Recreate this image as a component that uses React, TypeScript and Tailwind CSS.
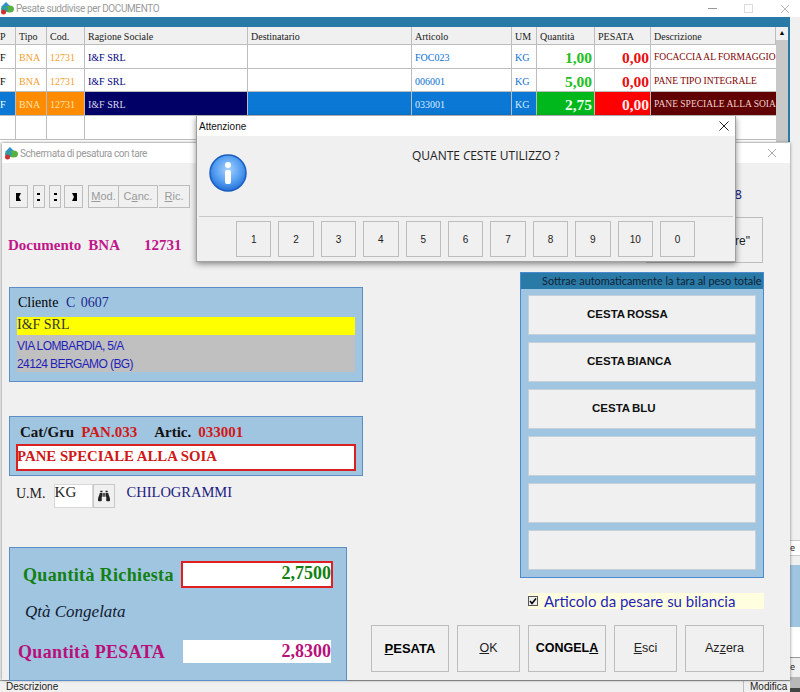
import { FaBinoculars } from "react-icons/fa"

const serif = "font-['Liberation_Serif',serif]"
const sans = "font-['Liberation_Sans',sans-serif]"
const titleFont = "font-['Roboto',sans-serif]"

const cols = [
  ["P", "w-[16px] pl-0"], ["Tipo", "w-[31px] pl-[3px]"], ["Cod.", "w-[38px] pl-[3px]"], ["Ragione Sociale", "w-[163px] pl-[3px]"],
  ["Destinatario", "w-[164px] pl-[3px]"], ["Articolo", "w-[100px] pl-[3px]"], ["UM", "w-[25px] pl-[3px]"], ["Quantità", "w-[58px] pl-[3px]"],
  ["PESATA", "w-[56px] pl-[3px]"], ["Descrizione", "w-[125px] pl-[3px]"],
]

const rows = [
  { art: "FOC023", qty: "1,00", pes: "0,00", desc: "FOCACCIA AL FORMAGGIO" },
  { art: "006001", qty: "5,00", pes: "0,00", desc: "PANE TIPO INTEGRALE" },
  { art: "033001", qty: "2,75", pes: "0,00", desc: "PANE SPECIALE ALLA SOIA", sel: true },
]

function Logo() {
  return (
    <svg width="14" height="13" viewBox="0 0 14 13" className="shrink-0">
      <path d="M6 0 L1 5 L11 5 Z" fill="#2f8fd0" />
      <ellipse cx="9.5" cy="7" rx="4.5" ry="3.5" fill="#58b040" />
      <ellipse cx="4.5" cy="7" rx="3.5" ry="3" fill="#2f9f9f" />
      <circle cx="3.5" cy="10" r="2.5" fill="#d03030" />
    </svg>
  )
}

function InfoIcon() {
  return (
    <svg width="38" height="38" viewBox="0 0 38 38">
      <defs>
        <radialGradient id="infoFill" cx="50%" cy="40%" r="65%">
          <stop offset="0%" stopColor="#a8d2ff" />
          <stop offset="60%" stopColor="#4f9bf0" />
          <stop offset="100%" stopColor="#1c63d0" />
        </radialGradient>
      </defs>
      <circle cx="19" cy="19" r="18" fill="url(#infoFill)" stroke="#1a5cc0" strokeWidth="1.5" />
      <circle cx="19" cy="11" r="3" fill="#fff" />
      <rect x="16" y="16" width="6" height="14" rx="2" fill="#fff" />
    </svg>
  )
}

function NavButton({ w, d }: { w: string; d: string }) {
  return (
    <div className={`${w} h-[23px] border border-[#bdbdbd] flex items-center justify-center`}>
      <svg width="6" height="8" viewBox="0 0 6 8"><path d={d} fill="#000" /></svg>
    </div>
  )
}

function Grid() {
  return (
    <div className={`${serif} w-[790px] border-r-2 border-[#2a7aa8] bg-white`}>
      <div className="h-[10px] bg-[#2a7aa8]" />
      <div className="flex">
        <div>
          <div className="flex h-[18px] bg-[#f0f0f0] border-b border-[#bdbdbd]">
            {cols.map(([label, w]) => (
              <div key={label} className={`${w} border-r border-[#bdbdbd] text-[10px] leading-[19px] text-[#222] whitespace-nowrap overflow-hidden`}>{label}</div>
            ))}
          </div>
          {rows.map((r) => (
            <div key={r.art} className={`flex h-[23.5px] border-b border-[#bdbdbd] text-[10px] leading-[25px] whitespace-nowrap ${r.sel ? "bg-[#0a78d4]" : "bg-white"}`}>
              <div className={`w-[16px] border-r border-[#bdbdbd] ${r.sel ? "text-white" : "text-black"}`}>F</div>
              <div className={`w-[31px] border-r border-[#bdbdbd] pl-[3px] ${r.sel ? "bg-[#ff8c00] text-[#ffe2b0]" : "text-[#f0a030]"}`}>BNA</div>
              <div className={`w-[38px] border-r border-[#bdbdbd] pl-[3px] ${r.sel ? "bg-[#ff8c00] text-[#ffe2b0]" : "text-[#f0a030]"}`}>12731</div>
              <div className={`w-[163px] border-r border-[#bdbdbd] pl-[3px] ${r.sel ? "bg-[#000066] text-[#d8d8f0]" : "text-[#000080]"}`}>I&amp;F SRL</div>
              <div className="w-[164px] border-r border-[#bdbdbd]" />
              <div className={`w-[100px] border-r border-[#bdbdbd] pl-[3px] ${r.sel ? "text-[#dcecff]" : "text-[#0a70d0]"}`}>{r.art}</div>
              <div className={`w-[25px] border-r border-[#bdbdbd] pl-[3px] ${r.sel ? "text-[#dcecff]" : "text-[#0a70d0]"}`}>KG</div>
              <div className={`w-[58px] border-r border-[#bdbdbd] pr-[2px] text-right text-[15.5px] font-bold ${r.sel ? "bg-[#00b81c] text-[#e8ffe8]" : "text-[#22c01e]"}`}>{r.qty}</div>
              <div className={`w-[56px] border-r border-[#bdbdbd] pr-[1px] text-right text-[15.5px] font-bold ${r.sel ? "bg-[#ff0000] text-[#ffe8e8]" : "text-[#e81010]"}`}>{r.pes}</div>
              <div className={`w-[125px] pl-[3px] text-[9.5px] overflow-hidden ${r.sel ? "bg-[#600000] text-[#f0d0d0]" : "text-[#800000]"}`}>{r.desc}</div>
            </div>
          ))}
          <div className="flex h-[24px] border-b border-[#bdbdbd]">
            {cols.slice(0, 3).map(([label, w]) => <div key={label} className={`${w} border-r border-[#bdbdbd]`} />)}
          </div>
        </div>
        <div className="w-[14px] h-[115px] bg-[#c8c8c8] flex flex-col">
          <div className="h-[13px] bg-[#f0f0f0] flex items-center justify-center text-[7px] leading-none text-black">▲</div>
        </div>
      </div>
    </div>
  )
}

function WeighWindow() {
  return (
    <div className="absolute left-[2px] top-[143px] w-[788px] h-[537px] bg-[#f0f0f0] shadow-[0_0_3px_rgba(0,0,0,0.5)]">
      <div className="flex h-[20px] items-center bg-white pl-[2px] gap-[2px]">
        <Logo />
        <span className={`${titleFont} text-[10px] text-[#9a9a9a] tracking-[-0.4px]`}>Schermata di pesatura con tare</span>
      </div>

      <div className="flex pl-[7px]">
        {/* left column: toolbar, document, customer, article, quantities */}
        <div className="w-[354px] shrink-0">
          <div className="flex items-center pt-[22px]">
            <NavButton w="w-[19px]" d="M0 0H5L3 4L5 8H0Z" />
            <div className="w-[5px]" />
            <NavButton w="w-[12px]" d="M1 0H4V2H1Z M1 6H4V8H1Z" />
            <div className="w-[4px]" />
            <NavButton w="w-[12px]" d="M2 0H5V2H2Z M2 6H5V8H2Z" />
            <div className="w-[3px]" />
            <NavButton w="w-[19px]" d="M6 0H1L3 4L1 8H6Z" />
            <div className="w-[5px]" />
            <div className={`${sans} flex h-[23px] text-[11px] leading-[21px] text-[#9a9a9a] text-center`}>
              <div className="w-[31px] border border-[#bdbdbd]"><u>M</u>od.</div>
              <div className="w-[39px] border border-l-0 border-[#bdbdbd]">C<u>a</u>nc.</div>
              <div className="w-[31px] border border-l-0 border-[#bdbdbd] ml-[1px]"><u>R</u>ic.</div>
            </div>
          </div>

          <div className={`${serif} mt-[27px] flex text-[15px] leading-[20px] font-bold text-[#c0168a] whitespace-nowrap`}>
            <span className="ml-[-1px]">Documento</span>
            <span className="ml-[7px]">BNA</span>
            <span className="ml-[24px]">12731</span>
          </div>

          <div className="mt-[32px] h-[95px] border border-[#5b8ec7] bg-[#a0c5e0] px-[7px] pt-[5px]">
            <div className={`${serif} h-[24px] pl-[1px] text-[14px] leading-[20px] text-black whitespace-nowrap`}>
              Cliente <span className="ml-[4px] text-[#1a2a90]">C</span> <span className="ml-[2px] text-[#1a2a90]">0607</span>
            </div>
            <div className={`${serif} h-[18px] bg-[#ffff00] text-[14px] leading-[16px] text-[#333]`}>I&amp;F SRL</div>
            <div className={`${sans} h-[19px] bg-[#c0c0c0] text-[12px] leading-[22px] text-[#1f1fb8] tracking-[-0.6px]`}>VIA LOMBARDIA, 5/A</div>
            <div className={`${sans} h-[18px] bg-[#c0c0c0] text-[12px] leading-[21px] text-[#1f1fb8] tracking-[-0.6px]`}>24124 BERGAMO (BG)</div>
          </div>

          <div className="mt-[34px] h-[60px] border border-[#5b8ec7] bg-[#a0c5e0] px-[6px] pt-[5px]">
            <div className={`${serif} flex h-[22px] pl-[4px] text-[15px] leading-[20px] font-bold text-[#111] whitespace-nowrap`}>
              <span>Cat/Gru</span>
              <span className="ml-[7px] text-[#d01818]">PAN.033</span>
              <span className="ml-[17px]">Artic.</span>
              <span className="ml-[7px] text-[#d01818]">033001</span>
            </div>
            <div className={`${serif} h-[27px] border-2 border-[#d82020] bg-white text-[14.8px] leading-[20px] font-bold text-[#d01818] -indent-[1px]`}>PANE SPECIALE ALLA SOIA</div>
          </div>

          <div className={`${serif} mt-[8px] flex h-[24px] items-start`}>
            <span className="ml-[7px] mt-[1px] text-[14px] leading-[18px] text-[#222]">U.M.</span>
            <div className="ml-[8px] flex h-[24px]">
              <div className="w-[39px] bg-white text-[15px] leading-[15px] text-[#222] border border-[#d8d8d8]">KG</div>
              <div className="w-[22px] border border-[#c8c8c8] flex items-center justify-center">
                <FaBinoculars size={12} className="text-[#222]" />
              </div>
            </div>
            <span className="ml-[12px] text-[14.5px] leading-[16px] text-[#1a2080]">CHILOGRAMMI</span>
          </div>

          <div className="mt-[39px] w-[338px] h-[134px] border border-[#5b8ec7] bg-[#a0c5e0] pt-[13px]">
            <div className={`${serif} flex h-[27px] pl-[13px] items-center`}>
              <span className="w-[158px] text-[18px] leading-[24px] font-bold text-[#128012] whitespace-nowrap tracking-[0.35px]">Quantità Richiesta</span>
              <div className="w-[152px] h-[27px] border-2 border-[#e02020] bg-white text-right text-[18px] leading-[21px] font-bold text-[#128012]">2,7500</div>
            </div>
            <div className={`${serif} h-[52px] pl-[15px] text-[17px] leading-[48px] italic text-[#111a30]`}>Qtà Congelata</div>
            <div className={`${serif} flex h-[23px] pl-[8px] items-center`}>
              <span className="w-[165px] text-[18px] leading-[28px] font-bold text-[#b8107a] whitespace-nowrap tracking-[0.35px]">Quantità PESATA</span>
              <div className="w-[148px] h-[23px] bg-white text-right text-[18px] leading-[22px] font-bold text-[#b8107a]">2,8300</div>
            </div>
          </div>
        </div>

        {/* right column: hidden button, baskets, checkbox, actions */}
        <div className="ml-[8px] w-[393px]">
          <div className="h-[29px] pt-[23px] text-right pr-[22px] text-[13px] leading-[16px] text-[#1a2080]">8</div>
          <div className={`${sans} ml-[275px] mt-[25px] w-[117px] h-[46px] border border-[#bdbdbd] text-right pr-[12px] pt-[14px] text-[12px] text-[#222]`}>re"</div>

          <div className="ml-[149px] mt-[9px] w-[244px] h-[306px] border border-[#4a8ad0] bg-[#a0c5e0]">
            <div className="h-[16px] bg-[#2a7aa8] pl-[21px] text-[10.9px] leading-[16px] text-[#123] font-['Lato',sans-serif] whitespace-nowrap overflow-hidden">Sottrae automaticamente la tara al peso totale</div>
            <div className="flex flex-col gap-[7px] px-[7px] pt-[6px]">
              {["CESTA ROSSA", "CESTA BIANCA", "CESTA BLU", "", "", ""].map((label, i) => (
                <div key={i} className={`${sans} h-[40px] border border-[#c4d0da] bg-[#f0f0f0] text-[11.5px] leading-[36px] font-bold text-[#111] [word-spacing:-1px] ${i === 2 ? "pl-[63px]" : "pl-[58px]"}`}>{label}</div>
              ))}
            </div>
          </div>

          <div className="ml-[157px] mt-[15px] w-[236px] h-[16px] flex items-center bg-[#ffffe0]">
            <div className="w-[10px] h-[10px] border border-[#555] bg-[#eee] flex items-center justify-center">
              <svg width="8" height="8" viewBox="0 0 8 8"><path d="M1 4 L3 6.5 L7 1.5" stroke="#000" strokeWidth="1.5" fill="none" /></svg>
            </div>
            <span className="ml-[6px] font-['Lato',sans-serif] text-[15px] leading-[18px] text-[#1f1fb8] whitespace-nowrap">Articolo da pesare su bilancia</span>
          </div>

          <div className={`${sans} mt-[16px] flex gap-[8px] text-[12.5px] text-[#222]`}>
            <div className="w-[78px] h-[47px] border border-[#bdbdbd] flex items-center justify-center text-[13px] font-bold text-black"><span><u>P</u>ESATA</span></div>
            <div className="w-[63px] h-[47px] border border-[#bdbdbd] flex items-center justify-center"><span><u>O</u>K</span></div>
            <div className="w-[78px] h-[47px] border border-[#bdbdbd] flex items-center justify-center font-bold text-black"><span>CONGEL<u>A</u></span></div>
            <div className="w-[63px] h-[47px] border border-[#bdbdbd] flex items-center justify-center"><span><u>E</u>sci</span></div>
            <div className="w-[79px] h-[47px] border border-[#bdbdbd] flex items-center justify-center"><span>Az<u>z</u>era</span></div>
          </div>
        </div>
      </div>
    </div>
  )
}

function QuestionDialog() {
  const nums = ["1", "2", "3", "4", "5", "6", "7", "8", "9", "10", "0"]
  return (
    <div className="absolute left-[196px] top-[116px] w-[540px] h-[146px] bg-[#f0f0f0] border-b border-r border-l border-[#a0a0a0] shadow-[0_2px_6px_rgba(0,0,0,0.45)]">
      <div className="flex h-[20px] items-center justify-between bg-white pl-[2px] pr-[6px]">
        <span className={`${sans} text-[10px] text-[#111]`}>Attenzione</span>
        <svg width="10" height="10" viewBox="0 0 10 10"><path d="M0.5 0.5 L9.5 9.5 M9.5 0.5 L0.5 9.5" stroke="#222" strokeWidth="1" /></svg>
      </div>
      <div className="flex h-[81px] border-b border-[#c8c8c8] mx-[2px]">
        <div className="ml-[10px] mt-[18px]"><InfoIcon /></div>
        <div className="font-['Open_Sans',sans-serif] ml-[165px] mt-[12px] text-[12px] leading-[16px] text-[#222]">QUANTE <i>C</i>ESTE UTILIZZO ?</div>
      </div>
      <div className="flex pl-[39px] pt-[4px] gap-[7px]">
        {nums.map((n) => (
          <div key={n} className={`${sans} w-[35.4px] h-[36px] border border-[#bdbdbd] flex items-center justify-center text-[10px] text-[#222]`}>{n}</div>
        ))}
      </div>
    </div>
  )
}

export default function App() {
  return (
    <div className="relative w-[800px] h-[692px] overflow-hidden bg-[#f0f0f0]">
      {/* main window behind */}
      <div className="flex h-[17px] items-center justify-between bg-white pr-[10px]">
        <div className="flex items-center gap-[2px]">
          <Logo />
          <span className={`${titleFont} text-[10px] text-[#9a9a9a] tracking-[-0.4px]`}>Pesate suddivise per DOCUMENTO</span>
        </div>
        <div className="flex items-center gap-[27px]">
          <div className="w-[9px] h-px bg-[#999]" />
          <div className="w-[9px] h-[9px] border border-[#ddd]" />
          <svg width="10" height="10" viewBox="0 0 10 10"><path d="M1 1 L9 9 M9 1 L1 9" stroke="#bbb" strokeWidth="1" /></svg>
        </div>
      </div>
      <Grid />

      {/* bits of the main window right of the weighing window */}
      <div className="absolute right-0 top-[540px] w-[10px] h-[16px] bg-white border-y border-[#ccc] text-[9px] leading-[14px] text-[#333]">e</div>
      <div className="absolute right-0 top-[565px] w-[10px] h-[62px] bg-[#a0c5e0]" />
      <div className="absolute right-0 top-[627px] w-[10px] h-[31px] bg-white border-b border-[#999]" />
      <div className="absolute right-0 top-[661px] w-[10px] text-[9px] leading-[12px] text-[#333]">e</div>
      <div className="absolute right-0 top-[677px] w-[10px] h-[11px] bg-[#b8b8b8]" />
      <div className="absolute right-0 top-[688px] w-[10px] h-[4px] bg-[#444]" />
      <div className={`absolute left-0 bottom-0 w-[790px] h-[12px] bg-[#f0f0f0] border-t border-[#a0a0a0] flex justify-between text-[10px] leading-[11px] text-[#222] ${sans}`}>
        <span className="pl-[6px]">Descrizione</span>
        <span className="w-[47px] border-l border-[#bdbdbd] pl-[6px]">Modifica</span>
      </div>

      <WeighWindow />
      <div className="absolute left-[653px] top-[143px] w-[137px] h-[20px] bg-white flex items-center justify-end pr-[13px]">
        <svg width="10" height="10" viewBox="0 0 10 10"><path d="M1 1 L9 9 M9 1 L1 9" stroke="#aaa" strokeWidth="1" /></svg>
      </div>
      <QuestionDialog />
    </div>
  )
}
